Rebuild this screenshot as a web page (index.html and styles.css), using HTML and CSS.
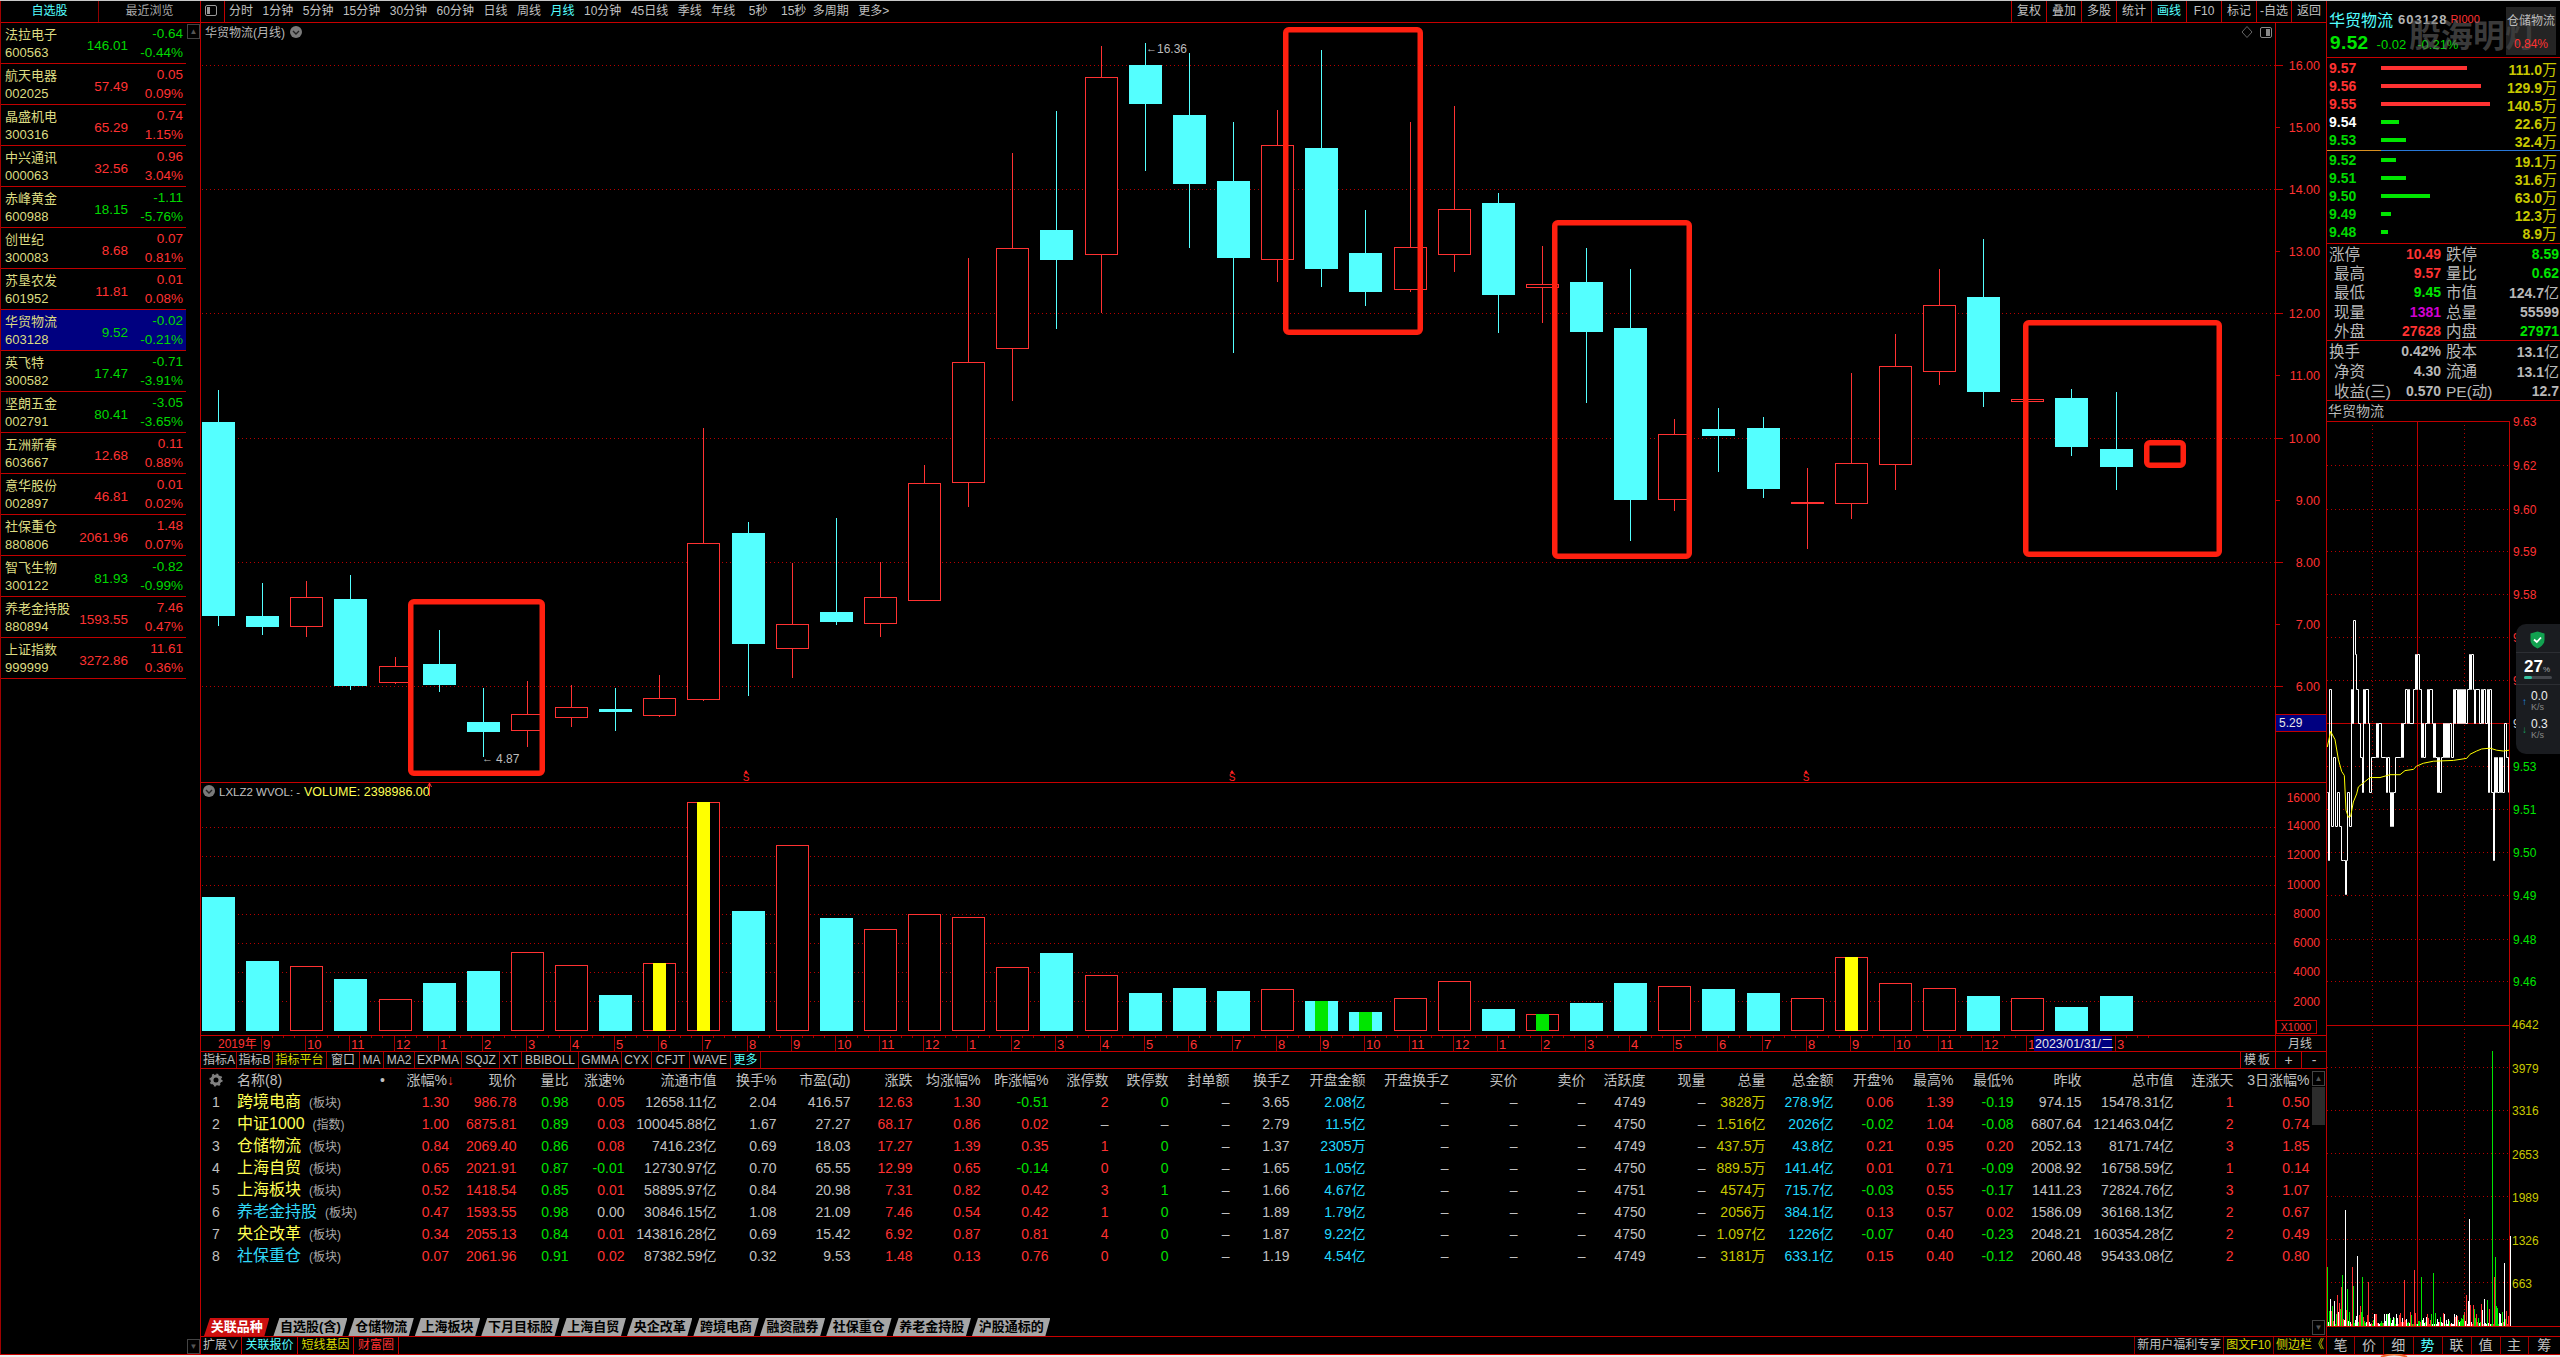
FILE: index.html
```html
<!DOCTYPE html>
<html lang="zh-CN">
<head>
<meta charset="UTF-8">
<title>华贸物流(月线)</title>
<link rel="stylesheet" href="styles.css">
</head>
<body>
<div class="app">

    <!-- 左侧自选股 -->
    <aside class="side">
        <div class="side-tabs">
            <div class="side-tab active">自选股</div>
            <div class="side-tab">最近浏览</div>
        </div>
        <div class="side-body">
            <div class="stock-list">
                <div class="stock"><span class="s-name">法拉电子</span><span class="s-code">600563</span><span class="s-price down">146.01</span><span class="s-chg down">-0.64</span><span class="s-pct down">-0.44%</span></div>
                <div class="stock"><span class="s-name">航天电器</span><span class="s-code">002025</span><span class="s-price up">57.49</span><span class="s-chg up">0.05</span><span class="s-pct up">0.09%</span></div>
                <div class="stock"><span class="s-name">晶盛机电</span><span class="s-code">300316</span><span class="s-price up">65.29</span><span class="s-chg up">0.74</span><span class="s-pct up">1.15%</span></div>
                <div class="stock"><span class="s-name">中兴通讯</span><span class="s-code">000063</span><span class="s-price up">32.56</span><span class="s-chg up">0.96</span><span class="s-pct up">3.04%</span></div>
                <div class="stock"><span class="s-name">赤峰黄金</span><span class="s-code">600988</span><span class="s-price down">18.15</span><span class="s-chg down">-1.11</span><span class="s-pct down">-5.76%</span></div>
                <div class="stock"><span class="s-name">创世纪</span><span class="s-code">300083</span><span class="s-price up">8.68</span><span class="s-chg up">0.07</span><span class="s-pct up">0.81%</span></div>
                <div class="stock"><span class="s-name">苏垦农发</span><span class="s-code">601952</span><span class="s-price up">11.81</span><span class="s-chg up">0.01</span><span class="s-pct up">0.08%</span></div>
                <div class="stock current"><span class="s-name">华贸物流</span><span class="s-code">603128</span><span class="s-price down">9.52</span><span class="s-chg down">-0.02</span><span class="s-pct down">-0.21%</span></div>
                <div class="stock"><span class="s-name">英飞特</span><span class="s-code">300582</span><span class="s-price down">17.47</span><span class="s-chg down">-0.71</span><span class="s-pct down">-3.91%</span></div>
                <div class="stock"><span class="s-name">坚朗五金</span><span class="s-code">002791</span><span class="s-price down">80.41</span><span class="s-chg down">-3.05</span><span class="s-pct down">-3.65%</span></div>
                <div class="stock"><span class="s-name">五洲新春</span><span class="s-code">603667</span><span class="s-price up">12.68</span><span class="s-chg up">0.11</span><span class="s-pct up">0.88%</span></div>
                <div class="stock"><span class="s-name">意华股份</span><span class="s-code">002897</span><span class="s-price up">46.81</span><span class="s-chg up">0.01</span><span class="s-pct up">0.02%</span></div>
                <div class="stock"><span class="s-name">社保重仓</span><span class="s-code">880806</span><span class="s-price up">2061.96</span><span class="s-chg up">1.48</span><span class="s-pct up">0.07%</span></div>
                <div class="stock"><span class="s-name">智飞生物</span><span class="s-code">300122</span><span class="s-price down">81.93</span><span class="s-chg down">-0.82</span><span class="s-pct down">-0.99%</span></div>
                <div class="stock"><span class="s-name">养老金持股</span><span class="s-code">880894</span><span class="s-price up">1593.55</span><span class="s-chg up">7.46</span><span class="s-pct up">0.47%</span></div>
                <div class="stock"><span class="s-name">上证指数</span><span class="s-code">999999</span><span class="s-price up">3272.86</span><span class="s-chg up">11.61</span><span class="s-pct up">0.36%</span></div>
            </div>
            <div class="side-scroll">
                <div class="scroll-btn">&#9650;</div>
                <div class="scroll-btn">&#9660;</div>
            </div>
        </div>
    </aside>

    <!-- 中间K线区 -->
    <main class="center">
        <div class="toolbar">
            <div class="tb-icon"><svg width="12" height="11" viewBox="0 0 12 11"><rect x="0.5" y="0.5" width="11" height="10" rx="1.5" fill="none" stroke="#9a9a9a"/><rect x="2" y="2" width="3" height="7" fill="#9a9a9a"/></svg></div>
            <div class="tb-periods">
                <span>分时</span><span>1分钟</span><span>5分钟</span><span>15分钟</span><span>30分钟</span><span>60分钟</span><span>日线</span><span>周线</span><span class="on">月线</span><span>10分钟</span><span>45日线</span><span>季线</span><span>年线</span><span class="wide">5秒</span><span class="wide">15秒</span><span class="tight">多周期</span><span>更多&gt;</span>
            </div>
            <div class="tb-tools">
                <span>复权</span><span>叠加</span><span>多股</span><span>统计</span><span class="on">画线</span><span>F10</span><span>标记</span><span>-自选</span><span>返回</span>
            </div>
        </div>

        <svg id="mainChart" class="chart-main" viewBox="201 23 2125 760" width="2125" height="760"></svg>
        <svg id="volChart" class="chart-vol" viewBox="201 783 2125 253" width="2125" height="253"></svg>
        <svg id="dateBar" class="date-bar" viewBox="201 1036 2125 15" width="2125" height="15"></svg>

        <div class="ind-bar">
            <div class="ind-tabs">
                <span>指标A</span><span>指标B</span><span class="yellow">指标平台</span><span>窗口</span><span>MA</span><span>MA2</span><span>EXPMA</span><span>SQJZ</span><span>XT</span><span>BBIBOLL</span><span>GMMA</span><span>CYX</span><span>CFJT</span><span>WAVE</span><span class="cyan">更多</span>
            </div>
            <div class="ind-tools"><span class="mb">模板</span><span class="pm">+</span><span class="pm">-</span></div>
        </div>

        <div class="quotes">
            <div class="q-table">
                <div class="q-row q-head" id="quoteHead"></div>
                <div id="quoteBody"></div>
            </div>
            <div class="q-scroll">
                <div class="scroll-btn">&#9650;</div>
                <div class="q-thumb"></div>
                <div class="scroll-btn end">&#9660;</div>
            </div>
            <div class="sheet-tabs">
                <span class="active">关联品种</span><span>自选股(含)</span><span>仓储物流</span><span>上海板块</span><span>下月目标股</span><span>上海自贸</span><span>央企改革</span><span>跨境电商</span><span>融资融券</span><span>社保重仓</span><span>养老金持股</span><span>沪股通标的</span>
            </div>
        </div>

        <div class="status">
            <div class="status-left">
                <span class="grey">扩展&or;</span><span class="cyan">关联报价</span><span class="yellow">短线基因</span><span class="red">财富圈</span>
            </div>
            <div class="status-right">
                <span class="grey">新用户福利专享</span><span class="yellow">图文F10</span><span class="yellow">侧边栏《</span>
            </div>
        </div>
    </main>

    <!-- 右侧盘口 -->
    <section class="panel">
        <div class="pn-head">
            <div class="pn-title"><span class="pn-name">华贸物流</span><span class="pn-code">603128</span><span class="pn-r">R<small>I000</small></span></div>
            <div class="pn-quote"><span class="pn-last">9.52</span><span class="pn-chg">-0.02</span><span class="pn-chg">-0.21%</span></div>
            <div class="watermark">股海明灯</div>
            <div class="pn-sector"><span>仓储物流</span><span class="up">0.84%</span></div>
        </div>

        <div class="book">
            <div class="bk-row"><span class="up">9.57</span><i class="bar-up" style="width:86px"></i><b>111.0<em>万</em></b></div>
            <div class="bk-row"><span class="up">9.56</span><i class="bar-up" style="width:100px"></i><b>129.9<em>万</em></b></div>
            <div class="bk-row"><span class="up">9.55</span><i class="bar-up" style="width:109px"></i><b>140.5<em>万</em></b></div>
            <div class="bk-row"><span class="white">9.54</span><i class="bar-dn" style="width:18px"></i><b>22.6<em>万</em></b></div>
            <div class="bk-row"><span class="dn">9.53</span><i class="bar-dn" style="width:25px"></i><b>32.4<em>万</em></b></div>
        </div>
        <div class="book-split"></div>
        <div class="book last">
            <div class="bk-row"><span class="dn">9.52</span><i class="bar-dn" style="width:15px"></i><b>19.1<em>万</em></b></div>
            <div class="bk-row"><span class="dn">9.51</span><i class="bar-dn" style="width:25px"></i><b>31.6<em>万</em></b></div>
            <div class="bk-row"><span class="dn">9.50</span><i class="bar-dn" style="width:49px"></i><b>63.0<em>万</em></b></div>
            <div class="bk-row"><span class="dn">9.49</span><i class="bar-dn" style="width:10px"></i><b>12.3<em>万</em></b></div>
            <div class="bk-row"><span class="dn">9.48</span><i class="bar-dn" style="width:7px"></i><b>8.9<em>万</em></b></div>
        </div>

        <div class="facts first">
            <span class="lb">涨停</span><b class="up">10.49</b><span class="lb">跌停</span><b class="dn">8.59</b>
            <span class="lb">最高</span><b class="up">9.57</b><span class="lb">量比</span><b class="dn">0.62</b>
            <span class="lb">最低</span><b class="dn">9.45</b><span class="lb">市值</span><b class="plain">124.7<em>亿</em></b>
            <span class="lb">现量</span><b class="purple">1381</b><span class="lb">总量</span><b class="plain">55599</b>
            <span class="lb">外盘</span><b class="up">27628</b><span class="lb">内盘</span><b class="dn">27971</b>
        </div>
        <div class="facts second">
            <span class="lb">换手</span><b class="plain">0.42%</b><span class="lb">股本</span><b class="plain">13.1<em>亿</em></b>
            <span class="lb">净资</span><b class="plain">4.30</b><span class="lb">流通</span><b class="plain">13.1<em>亿</em></b>
            <span class="lb">收益(三)</span><b class="plain">0.570</b><span class="lb">PE(动)</span><b class="plain">12.7</b>
        </div>

        <div class="min-title">华贸物流</div>
        <svg id="minChart" class="chart-min" viewBox="2327 421 233 915" width="233" height="915"></svg>

        <div class="pn-tabs">
            <span>笔</span><span>价</span><span>细</span><span class="cyan">势</span><span>联</span><span>值</span><span>主</span><span>筹</span>
        </div>

        <!-- 悬浮网速 -->
        <div class="netspeed">
            <svg class="ns-shield" width="15" height="18" viewBox="0 0 15 18"><path d="M7.5 0.5 L14.5 2.5 V9 C14.5 13 11 16 7.5 17.5 C4 16 0.5 13 0.5 9 V2.5 Z" fill="#12a150"/><path d="M4 8.5 L6.8 11 L11 6.5" fill="none" stroke="#fff" stroke-width="1.8"/></svg>
            <div class="ns-pct"><b>27</b><small>%</small></div>
            <div class="ns-track"><i></i></div>
            <div class="ns-line"><span class="ns-up">&#8593;</span><b>0.0</b><small>K/s</small></div>
            <div class="ns-line"><span class="ns-dn">&#8595;</span><b>0.3</b><small>K/s</small></div>
        </div>
    </section>
</div>

<!-- 窗口底边 -->
<div class="win-edge"><svg class="win-mark" width="28" height="3" viewBox="0 0 28 3"><path d="M1 3 C8 0 18 -1 27 3" fill="none" stroke="#f06a30" stroke-width="2"/></svg></div>

<script src="chart.js"></script>
</body>
</html>
```
FILE: styles.css
```css
* {
box-sizing: border-box;
}
html, body {
margin: 0;
padding: 0;
background-color: #000;
}
body {
width: 2560px;
height: 1357px;
overflow: hidden;
font-family: "Liberation Sans", "Noto Sans CJK SC", sans-serif;
font-size: 12px;
color: #c0c0c0;
border-top: 1px solid #c8c8c8;
}
.app {
display: grid;
grid-template-columns: 201px 2125px 234px;
height: 1354px;
border-bottom: 1px solid #c80000;
}
.up { color: #ff3232; }
.down, .dn { color: #00d800; }
.cyan { color: #54ffff; }
.yellow { color: #d8d800; }
.red { color: #ff3232; }
.white { color: #fff; }
.grey { color: #c0c0c0; }

/* 左侧 */
.side {
border-left: 1px solid #a00000;
border-right: 1px solid #c00000;
display: flex;
flex-direction: column;
}
.side-tabs {
display: grid;
grid-template-columns: 98px 1fr;
height: 22px;
border-bottom: 1px solid #c80000;
}
.side-tab {
line-height: 21px;
text-align: center;
color: #a8a8a8;
}
.side-tab.active {
color: #54ffff;
border-right: 1px solid #900000;
}
.side-body {
flex: 1;
display: flex;
}
.stock-list {
width: 185px;
}
.stock {
height: 41px;
display: grid;
grid-template-columns: 70px 53px 55px;
grid-template-rows: 22px 18px;
padding: 0 3px 0 4px;
border-bottom: 1px solid #c00000;
}
.stock.current {
background-color: #000080;
}
.s-name {
grid-column: 1;
grid-row: 1;
font-size: 13px;
line-height: 23px;
color: #dcdc82;
white-space: nowrap;
}
.s-code {
grid-column: 1;
grid-row: 2;
font-size: 13px;
line-height: 16px;
color: #dcdc82;
}
.s-price {
grid-column: 2;
grid-row: 1 / 3;
align-self: center;
text-align: right;
font-size: 13.5px;
padding-top: 4px;
}
.s-chg {
grid-column: 3;
grid-row: 1;
text-align: right;
font-size: 13.5px;
line-height: 22px;
}
.s-pct {
grid-column: 3;
grid-row: 2;
text-align: right;
font-size: 13.5px;
line-height: 16px;
}
.side-scroll {
flex: 1;
display: flex;
flex-direction: column;
justify-content: space-between;
padding: 1px 0 0 1px;
}
.scroll-btn {
height: 15px;
width: 13px;
border: 1px solid #444;
color: #555;
font-size: 8px;
line-height: 13px;
text-align: center;
}

/* 工具栏 */
.center {
display: flex;
flex-direction: column;
}
.toolbar {
height: 22px;
display: flex;
border-bottom: 1px solid #c80000;
line-height: 21px;
}
.tb-icon {
width: 24px;
padding: 4px 0 0 4px;
border-right: 1px solid #c00000;
}
.tb-periods {
display: flex;
gap: 9.5px;
padding-left: 4px;
white-space: nowrap;
}
.tb-periods .on, .tb-tools .on {
color: #54ffff;
}
.tb-periods .wide {
margin-left: 4px;
}
.tb-periods .tight {
margin-left: -3px;
}
.tb-tools {
margin-left: auto;
display: flex;
}
.tb-tools span {
width: 35px;
text-align: center;
border-left: 1px solid #c00000;
}

/* 图表 */
svg {
display: block;
}
.chart-main, .chart-vol, .date-bar {
flex: none;
}
.chart-text {
font-family: "Liberation Sans", "Noto Sans CJK SC", sans-serif;
}

/* 指标条 */
.ind-bar {
height: 18px;
display: flex;
justify-content: space-between;
border-top: 1px solid #c80000;
border-bottom: 1px solid #c80000;
line-height: 16px;
}
.ind-tabs {
margin-left: 1px;
display: grid;
grid-template-columns: 35px 36px 54px 33px 24px 31px 47px 38px 22px 57px 43px 30px 38px 41px 30px;
}
.ind-tabs span {
text-align: center;
border-right: 1px solid #a00000;
white-space: nowrap;
}
.ind-tabs .yellow {
color: #d8d800;
}
.ind-tabs .cyan {
color: #54ffff;
}
.ind-tools {
display: flex;
}
.ind-tools span {
border-left: 1px solid #c00000;
text-align: center;
}
.ind-tools .mb {
width: 35px;
letter-spacing: 2px;
}
.ind-tools .pm {
width: 26px;
font-size: 14px;
}
.ind-tools .pm:last-child {
width: 25px;
}

/* 行情表 */
.quotes {
height: 268px;
display: grid;
grid-template-columns: 1fr 14px;
grid-template-rows: 249px 18px;
border-bottom: 1px solid #c80000;
}
.q-row {
display: grid;
height: 22px;
line-height: 22px;
font-size: 14px;
grid-template-columns: 30px 162px 56px 67.5px 52px 56px 92px 60px 74px 62px 68px 68px 60px 60px 61px 60px 76px 83px 69px 68px 60px 60px 60px 68px 60px 60px 60px 68px 92px 60px 76px;
white-space: nowrap;
}
.q-row span {
text-align: right;
}
.q-row .q-no {
text-align: center;
}
.q-row .q-nm {
text-align: left;
padding-left: 6px;
font-size: 16px;
color: #ffff54;
}
.q-row .q-nm.blue {
color: #30d8f8;
}
.q-nm small {
font-size: 12px;
color: #a8a8a8;
margin-left: 8px;
}
.q-head span {
color: #c0c0c0;
}
.q-head .q-nm {
font-size: 14px;
color: #c0c0c0;
display: flex;
justify-content: space-between;
padding-right: 8px;
}
.q-head i {
font-style: normal;
color: #ff3232;
}
.q-gear {
display: flex;
justify-content: center;
align-items: center;
}
.c-up { color: #ff3232; }
.c-dn { color: #00e000; }
.c-sky { color: #20d8ff; }
.c-ye { color: #c8c800; }
.c-gy { color: #c0c0c0; }
.q-scroll {
grid-row: 1 / 3;
grid-column: 2;
display: flex;
flex-direction: column;
padding-top: 2px;
}
.q-thumb {
height: 38px;
margin-top: 1px;
width: 13px;
background-color: #2c2c2c;
}
.q-scroll .end {
margin-top: auto;
margin-bottom: 1px;
}
.sheet-tabs {
grid-row: 2;
grid-column: 1;
display: flex;
gap: 1px;
padding-left: 3px;
font-weight: 700;
font-size: 13px;
line-height: 17px;
color: #000;
}
.sheet-tabs span {
padding: 0 6.7px;
background-color: #a6a6a6;
clip-path: polygon(6px 0, 100% 0, calc(100% - 5px) 100%, 0 100%);
white-space: nowrap;
}
.sheet-tabs .active {
background-color: #cc1010;
color: #fff;
margin-right: 3px;
}

/* 状态栏 */
.status {
height: 17px;
display: flex;
justify-content: space-between;
line-height: 17px;
}
.status-left, .status-right {
display: flex;
}
.status-left span {
border-right: 1px solid #c00000;
padding: 0 2px;
text-align: center;
}
.status-left span:first-child {
width: 41px;
}
.status-left span:nth-child(2), .status-left span:nth-child(3) {
width: 56px;
}
.status-left span:last-child {
width: 45px;
}
.status-right span {
padding: 0 2px;
white-space: nowrap;
border-left: 1px solid #900000;
}

/* 右侧 */
.panel {
position: relative;
border-left: 1px solid #c00000;
display: flex;
flex-direction: column;
}
.pn-head {
position: relative;
height: 57px;
border-bottom: 1px solid #c80000;
padding-left: 2px;
}
.pn-title {
height: 28px;
display: flex;
align-items: center;
padding-top: 8px;
white-space: nowrap;
}
.pn-name {
font-size: 16px;
color: #54ffff;
margin-right: 5px;
}
.pn-code {
font-size: 13px;
font-weight: 700;
color: #b4b4b4;
letter-spacing: 1px;
}
.pn-r {
font-size: 11px;
color: #ff3232;
margin-left: 3px;
}
.pn-r small {
font-size: 11px;
}
.pn-quote {
display: flex;
align-items: baseline;
padding-top: 3px;
white-space: nowrap;
}
.pn-last {
font-size: 19px;
font-weight: 700;
color: #00e600;
margin: 0 8px 0 1px;
letter-spacing: 0.4px;
}
.pn-chg {
font-size: 13px;
color: #00d800;
margin-right: 11px;
}
.watermark {
position: absolute;
left: 82px;
top: 12px;
font-size: 32px;
line-height: 46px;
font-weight: 700;
color: rgba(110, 110, 110, 0.55);
white-space: nowrap;
}
.pn-sector {
position: absolute;
left: 179px;
top: 6px;
width: 50px;
height: 48px;
background-color: rgba(60, 60, 60, 0.6);
font-size: 12px;
text-align: center;
display: flex;
flex-direction: column;
justify-content: space-around;
white-space: nowrap;
color: #bbb;
}
.pn-sector .up {
font-size: 12px;
}
.book {
padding: 1px 0;
}
.book.last {
height: 93px;
padding: 0;
border-bottom: 1px solid #c80000;
}
.bk-row {
height: 18px;
display: flex;
align-items: center;
padding: 0 3px 0 2px;
font-weight: 700;
font-size: 14px;
}
.bk-row span {
width: 52px;
}
.bk-row i {
display: block;
height: 4px;
}
.bar-up { background-color: #ff3232; }
.bar-dn { background-color: #00e600; }
.bk-row b {
margin-left: auto;
color: #c8c800;
}
.bk-row em, .facts em {
font-style: normal;
font-weight: 400;
font-size: 15px;
}
.book-split {
height: 1px;
background: linear-gradient(to right, #d89020 0, #d89020 54px, #2878d8 54px, #2878d8 100%);
}
.facts {
display: grid;
grid-template-columns: 50px 62px 50px 1fr;
border-bottom: 1px solid #c80000;
padding: 1px 1px 0 2px;
line-height: 19px;
font-size: 14px;
white-space: nowrap;
}
.facts.first {
height: 97px;
}
.facts.second {
height: 60px;
}
.facts .lb {
font-size: 15.5px;
color: #b8b8b8;
}
.facts b {
text-align: right;
}
.facts b + .lb {
padding-left: 5px;
}
.facts .plain { color: #b8b8b8; }
.facts .purple { color: #d000d0; }
.facts .up { color: #ff3232; }
.facts .dn { color: #00e600; }
.min-title {
height: 20px;
line-height: 20px;
padding-left: 1px;
font-size: 14px;
color: #b8b8b8;
}
.chart-min {
flex: none;
overflow: visible;
}
.pn-tabs {
height: 18px;
border-top: 1px solid #c80000;
display: grid;
grid-template-columns: 28px 29px 29.5px 29px 29px 29px 28px 1fr;
line-height: 17px;
text-align: center;
font-size: 14px;
}
.pn-tabs span {
border-right: 1px solid #a00000;
}
.pn-tabs span:last-child {
border-right: 0;
}
.netspeed {
position: absolute;
left: 189px;
top: 623px;
width: 44px;
height: 130px;
background-color: #1a1c20;
border-radius: 10px 0 0 10px;
padding-left: 6px;
}
.ns-shield {
margin: 7px 0 0 8px;
}
.ns-pct {
height: 33px;
margin: 3px 0 0 -6px;
padding: 3px 0 0 8px;
border-top: 1px solid #2c2e33;
border-bottom: 1px solid #2c2e33;
white-space: nowrap;
}
.ns-pct b {
font-size: 17px;
line-height: 22px;
color: #fff;
}
.ns-pct small {
font-size: 8px;
color: #aaa;
}
.ns-track {
width: 28px;
height: 3px;
background-color: #44464c;
border-radius: 2px;
margin-top: -9px;
margin-left: 2px;
position: relative;
}
.ns-track i {
display: block;
width: 8px;
height: 3px;
background-color: #35c0a0;
border-radius: 2px;
}
.ns-line {
display: grid;
grid-template-columns: 9px 1fr;
margin-top: 6px;
font-size: 11px;
line-height: 11px;
}
.ns-track + .ns-line {
margin-top: 12px;
}
.ns-line span {
grid-row: 1 / 3;
font-size: 10px;
line-height: 22px;
}
.ns-line b {
font-weight: 400;
color: #eee;
font-size: 12px;
}
.ns-line small {
color: #888;
font-size: 9px;
}
.ns-up { color: #2090f0; }
.ns-dn { color: #18a060; }
.win-edge {
position: relative;
height: 2px;
background-color: #f0f0f0;
}
.win-mark {
position: absolute;
left: 2380px;
top: -1px;
}
```
FILE: chart.js
```js
// 图表绘制
var NS = 'http://www.w3.org/2000/svg';
var CYAN = '#54ffff', RED = '#ff3232', GRID = '#b80000', LINE = '#c00000';

function add(parent, tag, attrs, text) {
    var node = document.createElementNS(NS, tag);
    for (var k in attrs) node.setAttribute(k, attrs[k]);
    if (text !== undefined) node.textContent = text;
    parent.appendChild(node);
    return node;
}
function hline(svg, x1, x2, y, color, dash) {
    var a = { x1: x1, x2: x2, y1: y + 0.5, y2: y + 0.5, stroke: color };
    if (dash) a['stroke-dasharray'] = '1 3';
    add(svg, 'line', a);
}
function vline(svg, x, y1, y2, color, dash) {
    var a = { x1: x + 0.5, x2: x + 0.5, y1: y1, y2: y2, stroke: color };
    if (dash) a['stroke-dasharray'] = '1 3';
    add(svg, 'line', a);
}
function label(svg, x, y, text, color, size, anchor) {
    add(svg, 'text', { x: x, y: y, fill: color, 'font-size': size || 12, 'text-anchor': anchor || 'start', 'class': 'chart-text' }, text);
}
function slotX(i) { return Math.round(218 + 44.13 * i); }

// ---- K线 ----
// [类型, 最高, 实体上沿, 实体下沿, 最低]，纵坐标按 2.05 倍量取
var candles = [
    ['c',758,824,1222,1242],['c',1154,1222,1244,1261],['r',1150,1182,1243,1265],['c',1138,1187,1365,1373],
    ['r',1306,1325,1356,1362],['c',1250,1320,1363,1377],['c',1369,1439,1459,1510],['r',1355,1423,1456,1490],
    ['r',1363,1409,1428,1450],['c',1369,1412,1418,1458],['r',1343,1389,1424,1429],['r',836,1073,1391,1396],
    ['c',1029,1051,1279,1386],['r',1113,1239,1288,1349],['c',1021,1213,1234,1240],['r',1111,1182,1235,1265],
    ['r',912,948,1188,1188],['r',487,700,946,998],['r',273,468,673,781],['c',187,430,492,633],
    ['r',53,116,479,601],['c',48,92,172,310],['c',68,195,336,467],['c',209,330,488,683],
    ['r',184,257,489,537],['c',61,262,510,547],['c',389,478,558,587],['r',209,466,552,557],
    ['r',176,388,479,517],['c',355,375,564,642],['r',463,542,548,621],['c',467,537,639,785],
    ['c',510,631,984,1068],['r',818,848,981,1006],['c',795,838,853,926],['c',814,836,961,980],
    ['r',918,987,991,1084],['r',724,909,989,1023],['r',644,710,911,963],['r',510,585,720,748],
    ['c',449,568,762,793],['r',776,776,780,780],['c',756,775,875,894],['c',762,879,916,963]
];
function py(v) { return Math.round(20 + v / 2.0497); }

function drawMain() {
    var svg = document.getElementById('mainChart');
    [65, 189, 313, 438, 562, 686].forEach(function(y) { hline(svg, 202, 2275, y, GRID, true); });

    // 右侧价格轴
    vline(svg, 2275, 23, 782, LINE);
    var prices = ['16.00','15.00','14.00','13.00','12.00','11.00','10.00','9.00','8.00','7.00','6.00'];
    var ys = [65,127,189,251,313,375,438,500,562,624,686];
    prices.forEach(function(p, i) {
        hline(svg, 2276, i % 2 ? 2280 : 2283, ys[i], LINE);
        label(svg, 2320, ys[i] + 5, p, RED, 12.5, 'end');
    });
    add(svg, 'rect', { x: 2276, y: 714, width: 50, height: 18, fill: '#000080' });
    hline(svg, 2276, 2326, 714, LINE);
    hline(svg, 2276, 2326, 731, LINE);
    label(svg, 2279, 727, '5.29', '#e8e8e8', 12);

    candles.forEach(function(c, i) {
        var x = slotX(i) + 0.5, t = py(c[2]), b = py(c[3]);
        var color = c[0] === 'c' ? CYAN : RED;
        add(svg, 'line', { x1: x, x2: x, y1: py(c[1]), y2: py(c[4]), stroke: color });
        if (c[0] === 'c') {
            add(svg, 'rect', { x: x - 16.5, y: t, width: 33, height: Math.max(b - t, 1), fill: CYAN });
        } else {
            add(svg, 'rect', { x: x - 16, y: t + 0.5, width: 32, height: Math.max(b - t, 1), fill: '#000', stroke: RED });
        }
    });

    // 最高最低标注
    label(svg, 1146, 52, '←', '#bdbdbd', 11);
    label(svg, 1157, 53, '16.36', '#bdbdbd', 12);
    label(svg, 482, 762, '←', '#bdbdbd', 11);
    label(svg, 496, 763, '4.87', '#bdbdbd', 12);

    // 手绘红框
    [[408,599,545,776],[1283,27,1423,335],[1552,220,1692,559],[2023,320,2222,557],[2144,440,2186,468]].forEach(function(r) {
        add(svg, 'rect', { x: r[0] + 2.75, y: r[1] + 2.75, width: r[2] - r[0] - 5.5, height: r[3] - r[1] - 5.5, rx: 3, fill: 'none', stroke: '#ff2010', 'stroke-width': 5.5 });
    });

    // 买卖点
    [746, 1232, 1806].forEach(function(x) {
        add(svg, 'path', { d: 'M' + (x - 2) + ' 773 L' + x + ' 770 L' + (x + 2) + ' 773 Z', fill: '#ff2020' });
        label(svg, x, 781, 'S', '#ff2020', 10, 'middle');
    });

    // 标题
    label(svg, 205, 37, '华贸物流(月线)', '#b8b8b8', 12);
    add(svg, 'circle', { cx: 296, cy: 32, r: 6, fill: '#7a7a7a' });
    add(svg, 'path', { d: 'M293 31 L296 34 L299 31', fill: 'none', stroke: '#222', 'stroke-width': 1.4 });

    // 右上角小图标
    add(svg, 'path', { d: 'M2247 26.5 L2252 32 L2247 37.5 L2242 32 Z', fill: 'none', stroke: '#666' });
    add(svg, 'rect', { x: 2260.5, y: 27.5, width: 11, height: 10, rx: 1.5, fill: 'none', stroke: '#888' });
    add(svg, 'rect', { x: 2266, y: 29, width: 4, height: 7, fill: '#888' });
    hline(svg, 201, 2326, 782, '#c80000');
}

// ---- 成交量 ----
// [类型, 柱顶, 中心色]
var volumes = [
    ['c',897],['c',961],['r',966],['c',979],['r',999],['c',983],['c',971],['r',952],['r',965],['c',995],
    ['r',963,'#ffff00'],['r',802,'#ffff00'],['c',911],['r',845],['c',918],['r',929],['r',914],['r',917],
    ['r',967],['c',953],['r',975],['c',993],['c',988],['c',991],['r',989],['c',1001,'#00e600'],['c',1012,'#00e600'],
    ['r',998],['r',981],['c',1009],['r',1014,'#00e600'],['c',1003],['c',983],['r',986],['c',989],['c',993],
    ['r',998],['r',957,'#ffff00'],['r',983],['r',988],['c',996],['r',998],['c',1007],['c',996]
];

function drawVolume() {
    var svg = document.getElementById('volChart');
    var base = 1031;
    [827, 856, 885, 914, 943, 972, 1001].forEach(function(y) { hline(svg, 202, 2275, y, GRID, true); });
    vline(svg, 2275, 783, 1035, LINE);
    var axis = [['16000',802],['14000',830],['12000',859],['10000',889],['8000',918],['6000',947],['4000',976],['2000',1006]];
    axis.forEach(function(a) { label(svg, 2320, a[1], a[0], RED, 12, 'end'); });
    add(svg, 'rect', { x: 2276.5, y: 1020.5, width: 40, height: 13, fill: 'none', stroke: LINE });
    label(svg, 2296, 1031, 'X1000', RED, 10.5, 'middle');

    volumes.forEach(function(v, i) {
        var x = slotX(i) + 0.5;
        if (v[0] === 'c') {
            add(svg, 'rect', { x: x - 16.5, y: v[1], width: 33, height: base - v[1], fill: CYAN });
        } else {
            add(svg, 'rect', { x: x - 16, y: v[1] + 0.5, width: 32, height: base - v[1] - 1, fill: '#000', stroke: RED });
        }
        if (v[2]) add(svg, 'rect', { x: x - 6.5, y: v[1], width: 13, height: base - v[1], fill: v[2] });
    });

    add(svg, 'circle', { cx: 209, cy: 791, r: 6, fill: '#7a7a7a' });
    add(svg, 'path', { d: 'M206 790 L209 793 L212 790', fill: 'none', stroke: '#222', 'stroke-width': 1.4 });
    label(svg, 219, 796, 'LXLZ2 WVOL: -', '#c0c0c0', 11.5);
    label(svg, 304, 796, 'VOLUME: 2398986.00', '#ffff54', 12.5);
    add(svg, 'path', { d: 'M429.5 796 V783 M427.5 787 L429.5 783 L431.5 787', fill: 'none', stroke: RED });
    hline(svg, 201, 2326, 1035, '#c80000');
}

// ---- 日期条 ----
function drawDates() {
    var svg = document.getElementById('dateBar');
    label(svg, 218, 1048, '2019年', RED, 12);
    for (var i = 1; i < 44; i++) {
        var x = slotX(i) - 1;
        vline(svg, x, 1036, 1051, '#a00000');
        for (var j = 1; j < 4; j++) vline(svg, x + j * 11, 1036, 1038, '#a00000');
        if (i === 42) continue;
        label(svg, x + 2, 1049, String((7 + i) % 12 + 1), RED, 13);
    }
    add(svg, 'rect', { x: 2034, y: 1036, width: 78, height: 15, fill: '#000080' });
    label(svg, 2035, 1048, '2023/01/31/二', '#e8e8e8', 12.5);
    add(svg, 'rect', { x: 2275, y: 1036, width: 51, height: 15, fill: '#000' });
    vline(svg, 2275, 1036, 1051, LINE);
    label(svg, 2300, 1048, '月线', '#c0c0c0', 12, 'middle');
}

// ---- 分时 ----
// [横坐标(放大3倍), 价格]
var ticks = [
    [82,9.52],[85,9.50],[88,9.55],[92,9.55],[94,9.51],[98,9.53],[104,9.53],[106,9.51],[110,9.52],[116,9.51],
    [122,9.51],[124,9.50],[130,9.50],[134,9.49],[138,9.50],[142,9.52],[148,9.51],[152,9.55],[156,9.54],[160,9.57],
    [164,9.56],[168,9.55],[174,9.54],[180,9.53],[186,9.52],[190,9.55],[204,9.54],[208,9.52],[214,9.53],[224,9.53],
    [228,9.54],[244,9.53],[256,9.53],[268,9.52],[276,9.51],[280,9.52],[284,9.53],[300,9.53],[308,9.54],[316,9.55],
    [320,9.54],[340,9.55],[344,9.56],[358,9.55],[362,9.53],[376,9.54],[382,9.55],[396,9.54],[404,9.53],[412,9.52],
    [424,9.53],[428,9.54],[438,9.53],[448,9.54],[452,9.53],[460,9.55],[470,9.54],[480,9.55],[490,9.54],[500,9.55],
    [508,9.56],[520,9.55],[536,9.54],[542,9.55],[556,9.54],[560,9.55],[574,9.52],[578,9.50],[582,9.53],[586,9.52],
    [598,9.53],[606,9.52],[612,9.54],[618,9.53],[625,9.52]
];
var avg = [
    [82,850],[92,812],[105,832],[115,880],[125,910],[133,920],[138,1005],[145,1022],[152,1020],[160,985],[170,965],
    [175,948],[190,938],[210,925],[240,925],[270,918],[300,918],[315,908],[340,905],[350,897],[370,890],[400,885],
    [460,883],[500,878],[510,868],[530,860],[545,855],[570,853],[590,858],[610,860],[627,858]
];

function levelY(p) { return Math.round(723 + (9.54 - p) * 3430) + 0.5; }
function zx(v) { return 2300 + v / 3; }

function drawMinute() {
    var svg = document.getElementById('minChart');
    var L = 2327, R = 2509;

    hline(svg, L, R, 421, LINE);
    var labels = ['9.63','9.62','9.60','9.59','9.58','9.57','9.55','9.54','9.53','9.51','9.50','9.49','9.48','9.46'];
    var ys = [421,465,509,551,594,637,680,723,766,809,852,895,939,981];
    ys.forEach(function(y, i) {
        if (i === 0) return;
        if (i === 7) hline(svg, L, R, y, LINE);
        else hline(svg, L, R, y, GRID, true);
    });
    ys.forEach(function(y, i) {
        var color = i < 7 ? RED : i === 7 ? '#d0d0d0' : '#00e600';
        label(svg, 2513, y + 5, labels[i], color, 12);
    });
    hline(svg, L, R, 1025, LINE);
    label(svg, 2512, 1029, '4642', '#c8c800', 12);

    [2372, 2464].forEach(function(x) { vline(svg, x, 421, 1326, GRID, true); });
    [2417, 2509].forEach(function(x) { vline(svg, x, 421, 1326, LINE); });

    // 分时线
    var d = 'M' + zx(ticks[0][0]) + ' ' + levelY(ticks[0][1]);
    for (var i = 1; i < ticks.length; i++) {
        var x0 = Math.round(zx(ticks[i - 1][0])) + 0.5, x1 = Math.round(zx(ticks[i][0])) + 0.5;
        var y0 = levelY(ticks[i - 1][1]), y1 = levelY(ticks[i][1]);
        if (y0 !== y1 && x1 - x0 >= 3) d += ' H' + (x0 + 1) + ' V' + y1 + ' H' + (x0 + 2) + ' V' + y0;
        d += ' H' + x1 + ' V' + y1;
    }
    add(svg, 'path', { d: d, fill: 'none', stroke: '#fff' });
    add(svg, 'polyline', {
        points: avg.map(function(p) { return zx(p[0]) + ',' + (400 + p[1] / 2.45); }).join(' '),
        fill: 'none', stroke: '#ffff00'
    });

    // 分时量柱
    var base = 1326, seed = 7;
    hline(svg, L, 2560, base, '#c80000');
    var axis = [['3979',1069,1067],['3316',1111,1110],['2653',1155,1153],['1989',1198,1196],['1326',1241,1239],['663',1284,1282]];
    axis.forEach(function(a) {
        hline(svg, L, R, a[2], GRID, true);
        label(svg, 2512, a[1] + 4, a[0], '#c8c800', 12);
    });
    function rnd() { seed = (seed * 16807) % 2147483647; return seed / 2147483647; }
    for (var x = L; x < R; x++) {
        var r = rnd();
        var c = r < 0.45 ? '#fff' : r < 0.75 ? '#00e600' : RED;
        var k = rnd();
        var busy = x < 2365 ? 45 : x > 2465 ? 30 : 12;
        var h = Math.round(k * k * busy + 2);
        vline(svg, x, base - h, base, c);
    }
    var spikes = [
        [2492,1051,'#00e600'],[2345,1210,'#fff'],[2469,1219,'#fff'],[2510,1236,'#fff'],[2357,1256,'#fff'],
        [2495,1257,'#00e600'],[2504,1263,'#fff'],[2494,1277,RED],[2414,1270,RED],[2433,1273,'#00e600'],
        [2421,1277,'#00e600'],[2404,1280,RED],[2327,1267,'#00e600'],[2342,1275,'#00e600'],[2352,1267,RED],
        [2362,1277,'#00e600'],[2368,1282,RED]
    ];
    spikes.forEach(function(s) { vline(svg, s[0], s[1], base, s[2]); });
}

// ---- 关联品种表 ----
var heads = ['涨幅%','现价','量比','涨速%','流通市值','换手%','市盈(动)','涨跌','均涨幅%','昨涨幅%','涨停数','跌停数','封单额','换手Z','开盘金额','开盘换手Z','买价','卖价','活跃度','现量','总量','总金额','开盘%','最高%','最低%','昨收','总市值','连涨天','3日涨幅%'];
var rows = [
    ['跨境电商','板块','1.30','986.78','0.98','0.05','12658.11亿','2.04','416.57','12.63','1.30','-0.51','2','0','–','3.65','2.08亿','–','–','–','4749','–','3828万','278.9亿','0.06','1.39','-0.19','974.15','15478.31亿','1','0.50'],
    ['中证1000','指数','1.00','6875.81','0.89','0.03','100045.88亿','1.67','27.27','68.17','0.86','0.02','–','–','–','2.79','11.5亿','–','–','–','4750','–','1.516亿','2026亿','-0.02','1.04','-0.08','6807.64','121463.04亿','2','0.74'],
    ['仓储物流','板块','0.84','2069.40','0.86','0.08','7416.23亿','0.69','18.03','17.27','1.39','0.35','1','0','–','1.37','2305万','–','–','–','4749','–','437.5万','43.8亿','0.21','0.95','0.20','2052.13','8171.74亿','3','1.85'],
    ['上海自贸','板块','0.65','2021.91','0.87','-0.01','12730.97亿','0.70','65.55','12.99','0.65','-0.14','0','0','–','1.65','1.05亿','–','–','–','4750','–','889.5万','141.4亿','0.01','0.71','-0.09','2008.92','16758.59亿','1','0.14'],
    ['上海板块','板块','0.52','1418.54','0.85','0.01','58895.97亿','0.84','20.98','7.31','0.82','0.42','3','1','–','1.66','4.67亿','–','–','–','4751','–','4574万','715.7亿','-0.03','0.55','-0.17','1411.23','72824.76亿','3','1.07'],
    ['养老金持股','板块','0.47','1593.55','0.98','0.00','30846.15亿','1.08','21.09','7.46','0.54','0.42','1','0','–','1.89','1.79亿','–','–','–','4750','–','2056万','384.1亿','0.13','0.57','0.02','1586.09','36168.13亿','2','0.67'],
    ['央企改革','板块','0.34','2055.13','0.84','0.01','143816.28亿','0.69','15.42','6.92','0.87','0.81','4','0','–','1.87','9.22亿','–','–','–','4750','–','1.097亿','1226亿','-0.07','0.40','-0.23','2048.21','160354.28亿','2','0.49'],
    ['社保重仓','板块','0.07','2061.96','0.91','0.02','87382.59亿','0.32','9.53','1.48','0.13','0.76','0','0','–','1.19','4.54亿','–','–','–','4749','–','3181万','633.1亿','0.15','0.40','-0.12','2060.48','95433.08亿','2','0.80']
];
// 每列的配色：u 红 d 绿 s 按正负 g 灰 b 蓝 y 黄
var colorOf = 'uudsgggu' + 'usudggbgggggybsusggu' + 'u';

function cellClass(kind, v) {
    if (v === '–') return 'c-gy';
    if (kind === 's') return v.charAt(0) === '-' ? 'c-dn' : v === '0.00' ? 'c-gy' : 'c-up';
    return { u: 'c-up', d: 'c-dn', g: 'c-gy', b: 'c-sky', y: 'c-ye' }[kind];
}

function drawTable() {
    var head = document.getElementById('quoteHead');
    var html = '<span class="q-gear"><svg width="14" height="14" viewBox="0 0 14 14"><circle cx="7" cy="7" r="4" fill="none" stroke="#808080" stroke-width="3"/><circle cx="7" cy="7" r="5.8" fill="none" stroke="#808080" stroke-width="1.6" stroke-dasharray="2 2.5"/></svg></span>';
    html += '<span class="q-nm"><span>名称(8)</span><span>•</span></span>';
    heads.forEach(function(h, i) {
        html += i === 0 ? '<span style="margin-right:-5px">' + h + '<i>↓</i></span>' : '<span>' + h + '</span>';
    });
    head.innerHTML = html;

    var body = '';
    rows.forEach(function(r, n) {
        var blue = n === 5 || n === 7 ? ' blue' : '';
        body += '<div class="q-row"><span class="q-no c-gy">' + (n + 1) + '</span>';
        body += '<span class="q-nm' + blue + '">' + r[0] + '<small>(' + r[1] + ')</small></span>';
        r.slice(2).forEach(function(v, i) {
            body += '<span class="' + cellClass(colorOf.charAt(i), v) + '">' + v + '</span>';
        });
        body += '</div>';
    });
    document.getElementById('quoteBody').innerHTML = body;
}

drawMain();
drawVolume();
drawDates();
drawMinute();
drawTable();
```
